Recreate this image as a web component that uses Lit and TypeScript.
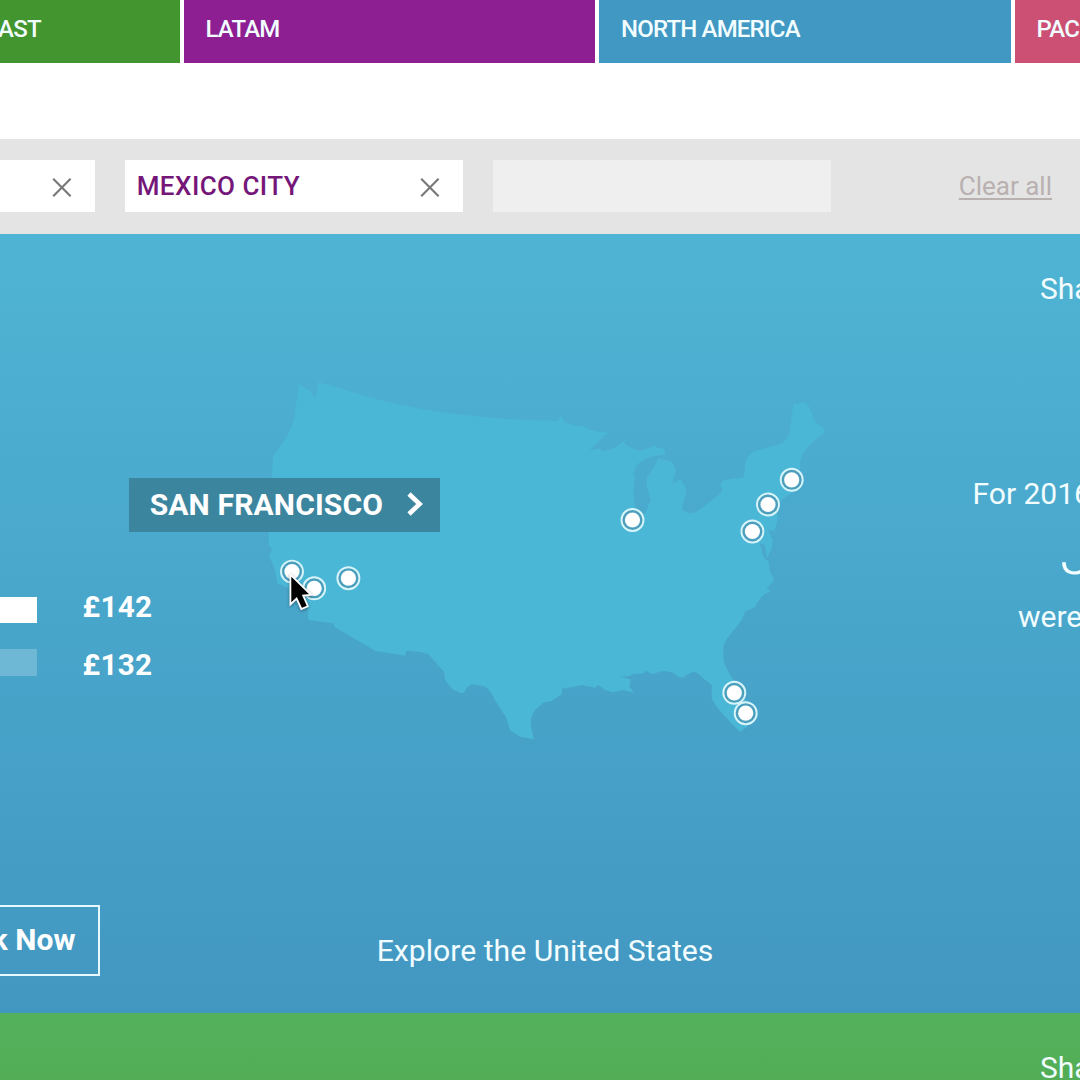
import { LitElement, html, css, svg } from "lit";
import { customElement, property } from "lit/decorators.js";

const MARKERS: [number, number][] = [
  [632.5, 520],
  [791.7, 479.8],
  [768, 504.5],
  [752.4, 531.5],
  [734.3, 692.8],
  [745.7, 713.2],
  [348.4, 578.2],
  [314.2, 588.3],
  [292, 571.6],
];

const OUTLINE = `M298.7 384L310 390.7L315 398L317.3 393L318.3 381.7L360 394.6Q400 406 440 412Q473 416.7 507 419L558.3 421L560.7 416L565 422.3L576.7 426L583.3 426Q588 430 594 431L610 433.3Q605 434 601.7 437.7L590 450L600 448.4L603.3 451.3Q610 450 615 447.3Q623 443 626.7 438.3L624 443.3L631.7 448.3L640 451L646.7 448.7L655 445.3L658 448L663.5 448.3L666 454.5L656.7 455.7Q644 457 636.7 465Q634 472 630.7 476.7L635 473.3L633.3 493.3L635 507L640 516L645 514L650.7 500L646.7 486.7L646.7 478.3L653.3 468.3L658.3 458.3L671.7 461.7L676 470L672.3 484L680.7 479L686.7 490L681.7 509.3Q686 513 690 513.3Q695 513 698.3 510.7L720 494L722.7 489.3L720 485.7L723.3 480Q735 479 743.3 477.3Q746 470 745 463.3Q748 454 753.3 451.7Q765 448 770 446.7Q780 444 783.3 441.7Q788 438 790 431.7Q792 415 793.3 403.3L797 404.3L803.3 401.7L808.3 405L815 421.7L821.7 426.7L825.5 431.7Q816 438 811.7 443.3Q804 450 801.7 456.7Q799 462 800 468.3L800 486L791.7 493.3L783.3 498.3L777.3 505L777.3 521.7L774 531.7L768 529L772.7 540L771.7 548.3L767 558.3L765 545L759.5 543L763.5 556.7L768.5 562L770 571.7L774 578.3L773 582L766.7 588.3L770.7 590.7Q764 593 760 599.3Q757 602 755 607.3L745 611.7L741.7 620L728.3 636.7Q723 644 723.3 650Q723 658 724.3 663.3Q728 673 735 681.7L753 713L747.3 726.7L740 732L730 721.7L722 713L716.7 706.7L711.7 698.3L711.7 685L703.3 678.3Q697 671 693.3 671.7Q688 673 683.3 677.7L679 677L673.3 672.7L663.3 670.7L651.7 674.3L646 670.7L643.3 673.3L633 674L628 676.5L618.5 676.3L630.7 679.3L629.3 686.7L634 692.7L623.3 690L613.3 692.3L605 690L598.3 685L595 687.7L581.7 685L565 688.5L562.5 687L561.7 694L551.7 701L544 702.3L535 710Q530 718 530.7 725L534 739.3L520 736.7Q514 733 510 730L506 716.7Q500 709 493.3 696.7Q489 688 483.3 686L471.7 684.3L467.5 687L463.3 693.3Q457 693 451.7 688.3L445 680L444 671.7L436 663L428.3 654L420 652L406.7 650.7L405 655.7L375 650.7L335 627.3L333.3 623.3L308.3 620L307.7 608L288 588L277.3 583.3L275 570L269.3 556L272 549L268.7 545L268.3 520L271.7 476.7L273.3 456.7L286.7 436.7Q293 424 296 413.3L294.3 411.7L297.7 396.7Z`;

@customElement("city-chip")
class CityChip extends LitElement {
  @property() label = "";
  static styles = css`
    :host {
      box-sizing: border-box;
      flex: 0 0 338px;
      height: 52px;
      padding: 0 22.5px 0 11.7px;
      display: flex;
      align-items: center;
      justify-content: space-between;
      background: #fff;
      color: #751679;
      font: 500 26px/52px Roboto, sans-serif;
      letter-spacing: 0.45px;
    }
    .close {
      width: 22px;
      height: 22px;
      margin-top: 3px;
    }
  `;
  render() {
    return html`<span>${this.label}</span>
      <svg class="close" viewBox="0 0 22 22" fill="none" stroke="#777" stroke-width="2.1">
        <path d="M2.2 1.8L19.6 19.2M19.6 1.8L2.2 19.2" />
      </svg>`;
  }
}

@customElement("us-map")
class UsMap extends LitElement {
  static styles = css`
    :host {
      display: block;
      position: relative;
      width: 580px;
      height: 380px;
    }
    .map {
      display: block;
      width: 580px;
      height: 380px;
    }
    .tooltip {
      position: absolute;
      left: -131px;
      top: 108.5px;
      box-sizing: border-box;
      width: 311.3px;
      height: 54px;
      padding: 0 17px 0 20.7px;
      display: flex;
      align-items: center;
      justify-content: space-between;
      background: #3c859f;
      color: #fff;
      font: 700 30px/54px Roboto, sans-serif;
      letter-spacing: 0.15px;
    }
    .chevron {
      width: 16px;
      height: 26px;
      margin-top: -3px;
    }
    .cursor {
      position: absolute;
      left: 26px;
      top: 200px;
      width: 28px;
      height: 44px;
      filter: drop-shadow(0 1px 1.5px rgba(0, 0, 0, 0.4));
    }
  `;
  render() {
    return html`
      <svg class="map" viewBox="260 370 580 380">
        <path d=${OUTLINE} fill="#4bb7d7" />
        ${MARKERS.map(
          ([x, y]) => svg`<g>
            <circle cx=${x} cy=${y} r="11" fill="#4b9fbd" stroke="#d8f5fa" stroke-width="1.9" />
            <circle cx=${x} cy=${y} r="7.6" fill="#fff" />
          </g>`
        )}
      </svg>
      <div class="tooltip">
        <span>SAN FRANCISCO</span>
        <svg class="chevron" viewBox="0 0 16 26" fill="none" stroke="#fff" stroke-width="4.6">
          <path d="M2 3L12.6 13L2 23" />
        </svg>
      </div>
      <svg class="cursor" viewBox="286 570 28 44">
        <path
          d="M290.4 574.6V604.4L296.6 598.6L301.4 609L307.8 606.2L303.2 595.6L311 594.8Z"
          fill="#000"
          stroke="#fff"
          stroke-width="1.8"
        />
      </svg>
    `;
  }
}

@customElement("app-root")
class AppRoot extends LitElement {
  static styles = css`
    :host {
      display: flex;
      flex-direction: column;
      width: 1080px;
      height: 1080px;
      overflow: hidden;
      background: #fff;
      color: #f2fdff;
      font-family: Roboto, "Noto Sans", sans-serif;
      white-space: nowrap;
    }
    .tabs {
      flex: none;
      display: flex;
      gap: 4px;
      height: 62.7px;
      margin-left: -231.6px;
    }
    .tab {
      box-sizing: border-box;
      flex: 0 0 411.5px;
      padding: 0 21.6px;
      font-size: 24px;
      font-weight: 500;
      line-height: 58px;
      letter-spacing: -0.82px;
    }
    .mideast {
      background: #42952f;
      padding-right: 139.2px;
      text-align: right;
    }
    .latam { background: #8d1f93; }
    .north { background: #4098c3; }
    .pacific { background: #cc4f74; }
    .selection {
      flex: none;
      box-sizing: border-box;
      height: 95.3px;
      margin-top: 75.9px;
      margin-left: -243px;
      padding: 0 28px 0 0;
      display: flex;
      align-items: center;
      gap: 30px;
      background: #e4e4e4;
    }
    .slot {
      flex: 0 0 338px;
      height: 52px;
      background: #efefef;
    }
    .clear {
      margin-left: auto;
      color: #b9b0b0;
      font-size: 26px;
      line-height: 52px;
      text-decoration: underline;
      text-decoration-thickness: 2px;
      text-underline-offset: 3px;
    }
    .panel {
      flex: none;
      height: 779.1px;
      display: grid;
      grid-template-columns: 260px 580px 240px;
      background: linear-gradient(#4fb4d4, #4297c1);
    }
    .fares {
      display: flex;
      flex-direction: column;
      align-items: flex-start;
      padding-top: 343.1px;
    }
    .fare {
      display: flex;
      align-items: center;
      gap: 45.5px;
      height: 58.3px;
      color: #fff;
      font-size: 29.7px;
      font-weight: 700;
      letter-spacing: 0.3px;
    }
    .bar {
      width: 37px;
      height: 26.3px;
      background: #fff;
      margin-top: 8px;
    }
    .bar.dim {
      background: #6eb7d5;
      margin-top: -4px;
    }
    .book {
      box-sizing: border-box;
      width: 200px;
      height: 71.5px;
      margin: 211px 0 0 -100.5px;
      padding-right: 22px;
      border: 2px solid #e6fafd;
      color: #fff;
      font-size: 30px;
      font-weight: 700;
      line-height: 66px;
      text-align: right;
    }
    .centre {
      display: flex;
      flex-direction: column;
      padding-top: 135.8px;
    }
    .explore {
      margin-top: 180px;
      padding-right: 10px;
      text-align: center;
      font-size: 30.2px;
      line-height: 42px;
    }
    .facts {
      display: flex;
      flex-direction: column;
      overflow: hidden;
      font-size: 30px;
      line-height: 40px;
    }
    .share {
      margin: 35px 0 0 200px;
    }
    .year {
      margin: 165.6px 0 0 132.5px;
    }
    .month {
      margin: 7px 0 0 220px;
      font-size: 60px;
      font-weight: 300;
      line-height: 66px;
      clip-path: inset(34px 0 0 0);
    }
    .were {
      margin: 10px 0 0 178px;
    }
    .next {
      flex: 1;
      overflow: hidden;
      background: linear-gradient(#54b15b, #52ad56);
      font-size: 30px;
      line-height: 40px;
      padding: 35px 0 0 1040px;
    }
  `;
  render() {
    return html`
      <nav class="tabs">
        <div class="tab mideast">MIDDLE EAST</div>
        <div class="tab latam">LATAM</div>
        <div class="tab north">NORTH AMERICA</div>
        <div class="tab pacific">PACIFIC</div>
      </nav>
      <div class="selection">
        <city-chip></city-chip>
        <city-chip label="MEXICO CITY"></city-chip>
        <div class="slot"></div>
        <a class="clear">Clear all</a>
      </div>
      <section class="panel">
        <div class="fares">
          <div class="fare"><div class="bar"></div><span>£142</span></div>
          <div class="fare"><div class="bar dim"></div><span>£132</span></div>
          <div class="book">Book Now</div>
        </div>
        <div class="centre">
          <us-map></us-map>
          <div class="explore">Explore the United States</div>
        </div>
        <div class="facts">
          <div class="share">Share</div>
          <div class="year">For 2016</div>
          <div class="month">J</div>
          <div class="were">were</div>
        </div>
      </section>
      <section class="next">Share</section>
    `;
  }
}
